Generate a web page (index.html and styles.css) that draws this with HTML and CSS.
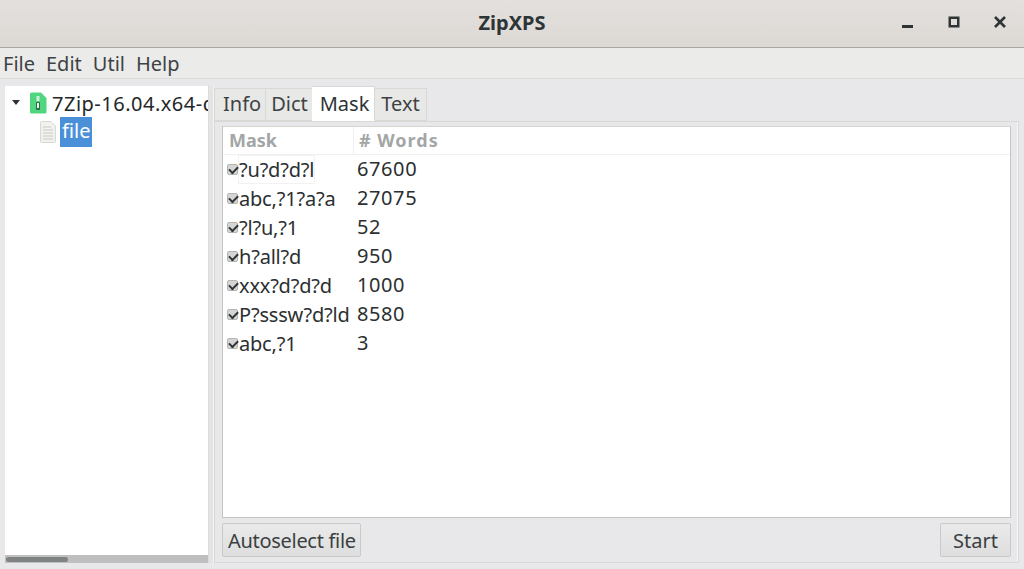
FILE: index.html
```
<!DOCTYPE html>
<html lang="en">
<head>
<meta charset="utf-8">
<title>ZipXPS</title>
<link rel="stylesheet" href="styles.css">
</head>
<body>
<div class="window">
  <header class="titlebar">
    <div class="title">ZipXPS</div>
    <div class="controls">
      <svg class="wc" width="16" height="16" viewBox="0 0 16 16"><rect x="2" y="11" width="11" height="3" fill="#2e3436"/></svg>
      <svg class="wc" width="16" height="16" viewBox="0 0 16 16"><path d="M2.500 2.500h11v11h-11z M5 5v6h6V5z" fill="#2e3436" fill-rule="evenodd"/></svg>
      <svg class="wc" width="16" height="16" viewBox="0 0 16 16"><path d="M3 3l10 10M13 3L3 13" stroke="#2e3436" stroke-width="2.600" fill="none"/></svg>
    </div>
  </header>
  <nav class="menubar">
    <span class="menu">File</span><span class="menu">Edit</span><span class="menu">Util</span><span class="menu">Help</span>
  </nav>
  <main class="content">
    <aside class="side">
      <div class="tree">
        <div class="node">
          <svg class="arrow" width="8" height="6" viewBox="0 0 8 6"><path d="M0 0h8L4 5z" fill="#2e3436"/></svg>
          <svg class="zip" width="18" height="22" viewBox="0 0 18 22"><path d="M1 2a1.500 1.500 0 0 1 1.500-1.500H12L17.500 6v14a1.500 1.500 0 0 1-1.500 1.500H2.500A1.500 1.500 0 0 1 1 20z" fill="#4fd67f"/><rect x="7.500" y="4" width="3" height="5" fill="#cfeedd"/><rect x="7" y="10" width="4" height="8" rx="1" fill="#2f6b48"/><rect x="8" y="11" width="2" height="5" fill="#e8f5ec"/></svg>
          <span class="node-label">7Zip-16.04.x64-deb</span>
        </div>
        <div class="node child">
          <svg class="doc" width="18" height="24" viewBox="0 0 18 24"><path d="M1.500 2.500a1 1 0 0 1 1-1H12L16.500 6v15.500a1 1 0 0 1-1 1h-13a1 1 0 0 1-1-1z" fill="#f1f1ef" stroke="#d8d8d5"/><path d="M4 7h8M4 10h10M4 13h10M4 16h10M4 19h10" stroke="#c9c9c6" stroke-width="1"/></svg>
          <span class="selected">file</span>
        </div>
      </div>
      <div class="hscroll"><div class="hthumb"></div></div>
    </aside>
    <div class="splitter"></div>
    <section class="right">
      <div class="tabs">
        <span class="tab">Info</span><span class="tab">Dict</span><span class="tab active">Mask</span><span class="tab">Text</span>
      </div>
      <div class="page">
        <div class="table">
          <div class="thead"><span class="col1 th">Mask</span><span class="col2 th"># Words</span></div>
          <div class="row"><span class="col1"><i class="check"></i><span class="cell-focus">?u?d?d?l</span></span><span class="col2">67600</span></div>
          <div class="row"><span class="col1"><i class="check"></i>abc,?1?a?a</span><span class="col2">27075</span></div>
          <div class="row"><span class="col1"><i class="check"></i>?l?u,?1</span><span class="col2">52</span></div>
          <div class="row"><span class="col1"><i class="check"></i>h?all?d</span><span class="col2">950</span></div>
          <div class="row"><span class="col1"><i class="check"></i>xxx?d?d?d</span><span class="col2">1000</span></div>
          <div class="row"><span class="col1"><i class="check"></i>P?sssw?d?ld</span><span class="col2">8580</span></div>
          <div class="row"><span class="col1"><i class="check"></i>abc,?1</span><span class="col2">3</span></div>
        </div>
        <div class="actions">
          <button class="btn">Autoselect file</button>
          <button class="btn">Start</button>
        </div>
      </div>
    </section>
  </main>
</div>
</body>
</html>
```
FILE: styles.css
```
* { box-sizing: border-box; }
html, body { margin: 0; height: 100%; }
body {
  font-family: "Noto Sans", sans-serif;
  font-size: 20px;
  color: #2e3436;
  background: #e8e8e7;
  overflow: hidden;
}
.window { width: 1024px; height: 569px; display: flex; flex-direction: column; }
.titlebar {
  height: 48px;
  flex: none;
  display: flex;
  align-items: center;
  justify-content: center;
  position: relative;
  background: linear-gradient(#e3e0dd, #dcd9d5);
  border-bottom: 1px solid #a9a7a3;
}
.title { font-weight: 700; font-size: 20px; color: #2e3436; padding-bottom: 3px; }
.controls { position: absolute; top: 14px; right: 16px; display: flex; gap: 30px; }
.wc { display: block; }
.menubar {
  height: 31px;
  flex: none;
  display: flex;
  align-items: center;
  gap: 11px;
  padding: 2px 0 0 3px;
  background: #ebebea;
  border-bottom: 1px solid #dcdcda;
  line-height: 26px;
  color: #3d4345;
}
.content { flex: 1; display: flex; min-height: 0; padding: 7px 5px 6px 5px; background: #e8e8ea; }
.side { width: 203px; flex: none; display: flex; flex-direction: column; }
.tree { flex: 1; background: #fff; overflow: hidden; padding-top: 3px; }
.node { display: flex; align-items: center; height: 28px; white-space: nowrap; position: relative; }
.arrow { margin-left: 7px; flex: none; }
.zip { margin-left: 9px; flex: none; }
.node-label { margin-left: 5px; font-size: 20px; color: #232729; letter-spacing: .5px; }
.child { height: 30px; padding-left: 34px; }
.doc { flex: none; }
.selected { margin-left: 3px; background: #4a90d9; color: #fff; padding: 0 2px; height: 30px; line-height: 28px; display: block; }
.hscroll { height: 8px; flex: none; background: #bfbfbf; padding: 2px 1px 1px; }
.hthumb { width: 62px; height: 5px; border-radius: 3px; background: #7f8283; }
.splitter { width: 6px; flex: none; border-left: 1px solid #dcdcdc; border-right: 1px solid #f4f4f4; background: #e4e4e4; }
.right { flex: 1; display: flex; flex-direction: column; min-width: 0; }
.tabs { display: flex; height: 35px; flex: none; align-items: flex-end; }
.tab {
  padding: 0 6px;
  height: 33px;
  line-height: 30px;
  background: #e8e8e7;
  border: 1px solid #d8d8d6;
  border-left: 0;
  color: #3d4345;
}
.tab:first-child { border-left: 1px solid #d8d8d6; padding: 0 4px 0 8px; }
.tab:nth-child(2) { padding: 0 5px; }
.tab.active { background: #fff; border-bottom-color: #fff; color: #2e3436; margin-left: -2px; padding: 0 5px 0 8px; height: 35px; line-height: 33px; position: relative; }
.page { flex: 1; display: flex; flex-direction: column; border: 1px solid #d8d8d6; padding: 4px 7px 5px 7px; min-height: 0; box-shadow: inset -1px 0 0 #f6f6f6; }
.table { flex: 1; background: #fff; border: 1px solid #c4c4c2; border-top-color: #d4d4d2; min-height: 0; }
.thead { display: flex; height: 28px; border-bottom: 1px solid #f0f0f0; }
.th { font-weight: 700; color: #a3a6a6; font-size: 18px; line-height: 27px; }
.col1 { width: 130px; flex: none; padding-left: 6px; display: flex; align-items: center; white-space: nowrap; }
.row .col1 { letter-spacing: -.2px; }
.col2 { padding-left: 4px; letter-spacing: .6px; }
.thead .col2 { border-left: 1px solid #f0f0f0; padding-left: 5px; letter-spacing: 1px; }
.row { display: flex; height: 29px; line-height: 27px; color: #2b2f31; }
.cell-focus { box-shadow: 0 0 0 1px #f2f2f2; }
.check {
  width: 11px; height: 11px; flex: none; margin: 0 1px 0 -2px;
  background: #d5d5d4; border: 1px solid #b5b5b3; border-radius: 2px; position: relative;
}
.check::after {
  content: ""; position: absolute; left: 1px; top: 1px; width: 7px; height: 4px;
  border-left: 2px solid #2e3436; border-bottom: 2px solid #2e3436; transform: rotate(-45deg);
}
.actions { display: flex; justify-content: space-between; margin-top: 5px; flex: none; }
.btn {
  font: inherit; color: #3a3f41; height: 34px; padding: 0 4px 0 5px; letter-spacing: -.3px;
  background: linear-gradient(#eaeaea, #dedede);
  border: 1px solid #c9c9c7; border-radius: 2px;
}
.actions .btn:last-child { padding: 0 12px; letter-spacing: 0; }
```
